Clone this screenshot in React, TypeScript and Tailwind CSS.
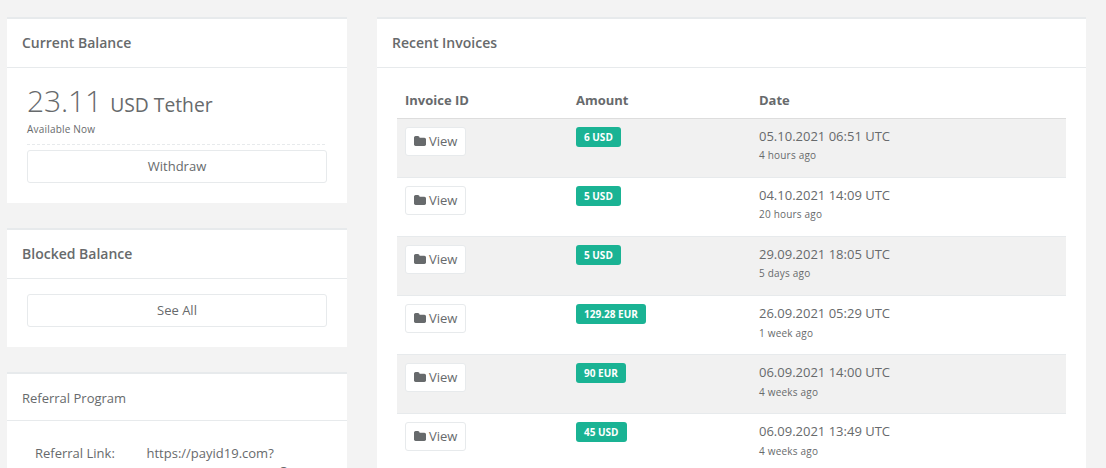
import type { ReactNode } from 'react';

interface Invoice {
  amount: string;
  date: string;
  ago: string;
}

const invoices: Invoice[] = [
  { amount: '6 USD', date: '05.10.2021 06:51 UTC', ago: '4 hours ago' },
  { amount: '5 USD', date: '04.10.2021 14:09 UTC', ago: '20 hours ago' },
  { amount: '5 USD', date: '29.09.2021 18:05 UTC', ago: '5 days ago' },
  { amount: '129.28 EUR', date: '26.09.2021 05:29 UTC', ago: '1 week ago' },
  { amount: '90 EUR', date: '06.09.2021 14:00 UTC', ago: '4 weeks ago' },
  { amount: '45 USD', date: '06.09.2021 13:49 UTC', ago: '4 weeks ago' },
];

function FolderIcon() {
  return (
    <svg viewBox="0 128 1664 1408" preserveAspectRatio="none" fill="currentColor" className="mb-px h-[10px] w-3">
      <path d="M1664 608v704q0 92-66 158t-158 66h-1216q-92 0-158-66t-66-158v-960q0-92 66-158t158-66h320q92 0 158 66t66 158v32h672q92 0 158 66t66 158z" />
    </svg>
  );
}

function Panel({ header, children }: { header: ReactNode; children: ReactNode }) {
  return (
    <section className="border-t-2 border-[#e7eaec] bg-white">
      {header}
      {children}
    </section>
  );
}

function PanelTitle({ title }: { title: string }) {
  return (
    <div className="h-[49px] border-b border-[#e7eaec] px-[15px] pt-[14px]">
      <h5 className="text-[14px] leading-5 font-semibold">{title}</h5>
    </div>
  );
}

function BlockButton({ label }: { label: string }) {
  return (
    <button className="block h-[33px] w-full rounded-[3px] border border-[#e7eaec] bg-white text-center leading-[19px]">
      {label}
    </button>
  );
}

function InvoiceTable() {
  return (
    <table className="w-full table-fixed border-collapse text-left">
      <colgroup>
        <col className="w-[171px]" />
        <col className="w-[183px]" />
        <col />
      </colgroup>
      <thead>
        <tr className="h-[35px] align-top">
          <th className="px-2 pt-2 font-bold">Invoice ID</th>
          <th className="px-2 pt-2 font-bold">Amount</th>
          <th className="px-2 pt-2 font-bold">Date</th>
        </tr>
      </thead>
      <tbody>
        {invoices.map((invoice, i) => (
          <tr
            key={invoice.date}
            className="h-[59px] border-t border-[#e7eaec] align-top first:border-[#dddddd] odd:bg-[#f1f1f1]"
          >
            <td className="px-2 pt-2">
              <button className="flex h-[29px] w-[61px] items-center gap-[3px] rounded-[3px] border border-[#e7eaec] bg-white pl-2">
                <FolderIcon />
                View
              </button>
            </td>
            <td className="px-2 pt-2">
              <span className="inline-block h-5 rounded-[3px] bg-[#1ab394] px-2 align-top text-[10px] leading-[21px] font-bold text-white">
                {invoice.amount}
              </span>
            </td>
            <td className="px-2 pt-2">
              <div className="leading-[19px]">{invoice.date}</div>
              <div className={`text-[10px] tracking-[0.2px] ${i < 3 ? 'leading-[19px]' : 'leading-5'}`}>
                {invoice.ago}
              </div>
            </td>
          </tr>
        ))}
      </tbody>
    </table>
  );
}

export default function App() {
  return (
    <div className="flex h-[468px] w-[1106px] items-start gap-[30px] overflow-hidden bg-[#f3f3f3] pt-[17px] pl-[7px] font-['Open_Sans',sans-serif] text-[13px] leading-[19px] text-[#676a6c]">
      <div className="flex w-[340px] flex-col gap-[25px]">
        <Panel header={<PanelTitle title="Current Balance" />}>
          <div className="h-[135px] px-5 pt-[14px]">
            <div className="flex h-[38px] items-baseline gap-2 leading-[37px]">
              <span className="text-[30px] font-light tracking-[-0.1px]">23.11</span>
              <span className="text-[19.3px]">USD Tether</span>
            </div>
            <div className="text-[10px] leading-[19px] tracking-[0.2px]">Available Now</div>
            <div className="mt-[5px] mb-[5px] h-px bg-[repeating-linear-gradient(to_right,#e7eaec_0_3px,transparent_3px_5px)]" />
            <BlockButton label="Withdraw" />
          </div>
        </Panel>
        <Panel header={<PanelTitle title="Blocked Balance" />}>
          <div className="h-[68px] px-5 pt-[15px]">
            <BlockButton label="See All" />
          </div>
        </Panel>
        <Panel
          header={
            <div className="h-[47px] border-b border-[#e7eaec] px-[15px] pt-[15px]">Referral Program</div>
          }
        >
          <div className="flex h-[120px] px-7 pt-[23px]">
            <div className="w-[111.5px]">Referral Link:</div>
            <div>
              https://payid19.com?
              <div className="pl-[132px] leading-[17px]">C</div>
            </div>
          </div>
        </Panel>
      </div>
      <div className="w-[709px]">
        <Panel header={<PanelTitle title="Recent Invoices" />}>
          <div className="px-5 pt-[15px]">
            <InvoiceTable />
          </div>
        </Panel>
      </div>
    </div>
  );
}
